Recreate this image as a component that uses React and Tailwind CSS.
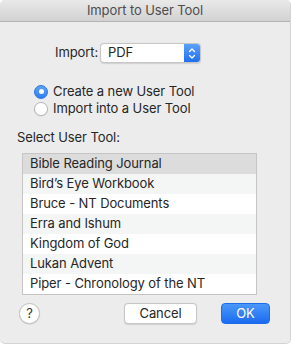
import React, { useState } from "react";

const tools = [
  "Bible Reading Journal",
  "Bird\u2019s Eye Workbook",
  "Bruce - NT Documents",
  "Erra and Ishum",
  "Kingdom of God",
  "Lukan Advent",
  "Piper - Chronology of the NT",
];

function Radio({ checked, label, onClick }) {
  return (
    <button onClick={onClick} className="flex items-center gap-[5px] h-[17px] text-left">
      {checked ? (
        <span className="w-[14px] h-[14px] rounded-full bg-gradient-to-b from-[#5aa1f9] to-[#2f7ff4] border border-[#2b77e8] flex items-center justify-center">
          <span className="w-[5px] h-[5px] rounded-full bg-white" />
        </span>
      ) : (
        <span className="w-[14px] h-[14px] rounded-full bg-white border border-[#b5b5b5] shadow-[0_0.5px_1px_rgba(0,0,0,0.1)]" />
      )}
      <span className="text-[13px] text-[#262626] leading-none">{label}</span>
    </button>
  );
}

export default function App() {
  const [mode, setMode] = useState("create");
  const [selected, setSelected] = useState(0);

  return (
    <div className="w-[292px] h-[346px] bg-white font-['Inter','Liberation_Sans',Arial,sans-serif] tracking-[-0.1px]">
      <div className="w-[291px] h-[344px] bg-[#ececec] rounded-[5px] border-r border-b border-[#d4d4d4] flex flex-col overflow-hidden">
        {/* Title bar */}
        <div className="h-[22px] shrink-0 bg-gradient-to-b from-[#e9e9e9] to-[#d2d2d2] border-b border-[#b3b3b3] flex items-center justify-center">
          <span className="text-[13px] text-[#4d4d4d]">Import to User Tool</span>
        </div>

        {/* Import select */}
        <div className="flex items-center pl-[55px] mt-[21px] h-[20px]">
          <span className="text-[13px] text-[#262626] w-[45px]">Import:</span>
          <div className="w-[101px] h-[20px] bg-white border border-[#c6c6c6] rounded-[4px] flex items-stretch shadow-[0_0.5px_1px_rgba(0,0,0,0.12)] overflow-hidden">
            <span className="flex-1 pl-[7px] text-[13px] text-[#262626] flex items-center">PDF</span>
            <span className="w-[16px] bg-gradient-to-b from-[#5aa1f9] to-[#1f6ff0] flex items-center justify-center">
              <svg width="8" height="13" viewBox="0 0 8 13" fill="none" stroke="white" strokeWidth="1.3" strokeLinecap="round" strokeLinejoin="round">
                <path d="M1.5 4.5 L4 2 L6.5 4.5" />
                <path d="M1.5 8.5 L4 11 L6.5 8.5" />
              </svg>
            </span>
          </div>
        </div>

        {/* Radios */}
        <div className="flex flex-col pl-[34px] mt-[20px]">
          <Radio checked={mode === "create"} label="Create a new User Tool" onClick={() => setMode("create")} />
          <Radio checked={mode === "import"} label="Import into a User Tool" onClick={() => setMode("import")} />
        </div>

        <div className="pl-[17px] mt-[12px] text-[13px] text-[#262626] leading-[16px]">Select User Tool:</div>

        {/* List */}
        <div className="ml-[22px] mt-[8px] w-[235px] border border-[#c5c5c5] bg-white flex flex-col">
          {tools.map((t, i) => (
            <button
              key={t}
              onClick={() => setSelected(i)}
              className={`h-[20px] pl-[7px] text-left text-[13px] text-[#262626] ${
                selected === i ? "bg-[#dcdcdc]" : i % 2 === 1 ? "bg-[#f4f5f5]" : "bg-white"
              }`}
            >
              {t}
            </button>
          ))}
        </div>

        {/* Buttons */}
        <div className="flex items-center mt-[8px] pl-[19px] pr-[20px]">
          <button className="w-[21px] h-[21px] rounded-full bg-white border border-[#c2c2c2] shadow-[0_0.5px_1px_rgba(0,0,0,0.15)] flex items-center justify-center text-[13px] text-[#333]">
            ?
          </button>
          <button className="ml-auto w-[73px] h-[21px] rounded-[4px] bg-white border border-[#c6c6c6] shadow-[0_0.5px_1px_rgba(0,0,0,0.12)] text-[13px] text-[#262626]">
            Cancel
          </button>
          <button className="ml-[24px] w-[49px] h-[21px] rounded-[4px] bg-gradient-to-b from-[#4b98f8] to-[#1a6bf0] border border-[#1e6de8] text-[13px] text-white">
            OK
          </button>
        </div>
      </div>
    </div>
  );
}
